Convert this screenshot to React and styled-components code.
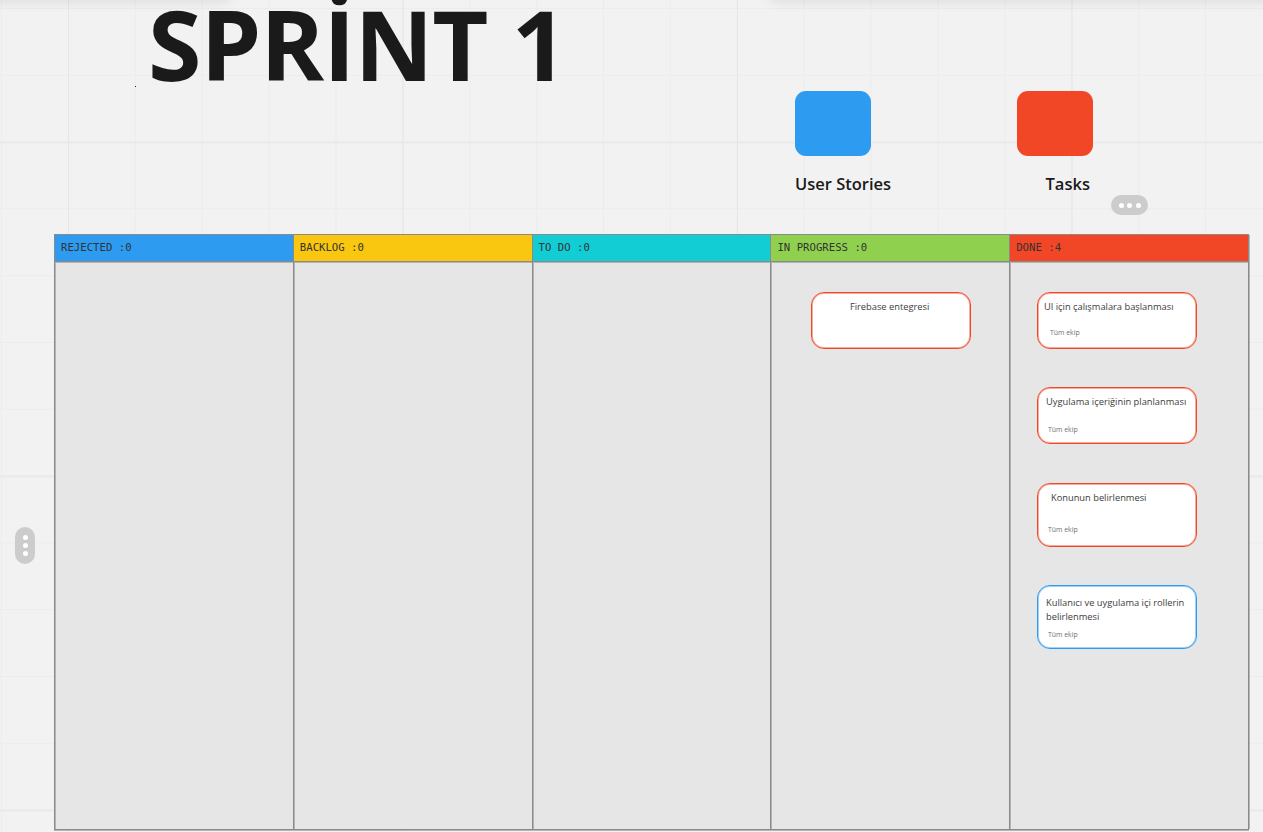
import React from "react";
import styled, { createGlobalStyle } from "styled-components";

const GlobalStyle = createGlobalStyle`
  html, body { margin: 0; padding: 0; background: #f2f2f2; }
  body { font-family: "Open Sans", "Noto Sans", sans-serif; overflow: hidden; }
`;

const Canvas = styled.div`
  position: relative;
  width: 1263px;
  height: 832px;
  overflow: hidden;
  background-color: #f2f2f2;
  background-image:
    linear-gradient(to right, #e6e6e6 1px, transparent 1px),
    linear-gradient(to bottom, #e9e9e9 2px, transparent 2px),
    linear-gradient(to right, #ececec 1px, transparent 1px),
    linear-gradient(to bottom, #ececec 1px, transparent 1px);
  background-size: 334.5px 334px, 334px 334px, 66.9px 66.8px, 66.8px 66.8px;
  background-position: 68px 0, 0 141.5px, 1px 0, 0 8px;
`;

const TopShadow = styled.div`
  position: absolute;
  top: -12px;
  left: ${(p) => p.$left}px;
  width: ${(p) => p.$width}px;
  height: 12px;
  box-shadow: 0 0 14px rgba(0, 0, 0, 0.12);
`;

const Header = styled.header`
  display: flex;
  height: 234px;
`;

const Title = styled.h1`
  flex: 0 0 795px;
  box-sizing: border-box;
  margin: 0;
  padding: 0 0 0 148px;
  font-size: 97px;
  font-weight: 700;
  letter-spacing: -1px;
  line-height: 87px;
  color: #1a1a1a;
  white-space: nowrap;
`;

const Legend = styled.div`
  display: flex;
  padding-top: 91px;
`;

const LegendItem = styled.div`
  width: 221.5px;
`;

const Swatch = styled.div`
  width: 76px;
  height: 65px;
  border-radius: 11px;
  background: ${(p) => p.$color};
`;

const LegendLabel = styled.div`
  margin-top: 17px;
  padding-left: ${(p) => p.$indent || 0}px;
  font-size: 16.5px;
  font-weight: 600;
  line-height: 22px;
  color: #1a1a1a;
`;

const Board = styled.div`
  display: grid;
  grid-template-columns: repeat(5, 1fr);
  box-sizing: border-box;
  width: 1195px;
  height: 596px;
  margin-left: 54px;
  background: #e6e6e6;
  border: 1px solid #8a8a8a;
  border-right-width: 0;
  box-shadow: inset 1px 1px 0 #b4b4b4, 0 1px 0 #b4b4b4;
`;

const Column = styled.section`
  display: flex;
  flex-direction: column;
  min-width: 0;
  border-right: 1px solid #8a8a8a;
  box-shadow: 1px 0 0 #b4b4b4;
`;

const ColumnHead = styled.div`
  flex: 0 0 26px;
  padding-left: 6px;
  font-family: "DejaVu Sans Mono", "Liberation Mono", monospace;
  font-size: 10.67px;
  line-height: 25px;
  color: #333;
  background: ${(p) => p.$color};
  border-bottom: 1px solid #8a8a8a;
  box-shadow: 0 1px 0 #b4b4b4;
`;

const CardList = styled.div`
  display: flex;
  flex-direction: column;
  gap: 38.3px;
  padding: 30px 0 0 ${(p) => p.$indent}px;
`;

const Card = styled.article`
  display: flex;
  flex-direction: column;
  justify-content: space-between;
  box-sizing: border-box;
  width: 160px;
  height: ${(p) => p.$height}px;
  padding: ${(p) => p.$top}px 0 ${(p) => p.$bottom}px;
  background: #fff;
  border: 1px solid ${(p) => p.$color};
  border-radius: 13px;
  box-shadow: inset 0 0 0 1px color-mix(in srgb, ${(p) => p.$color} 45%, transparent);
`;

const CardText = styled.div`
  padding-left: ${(p) => p.$indent}px;
  font-size: 9.3px;
  line-height: 14px;
  color: #3c3c3c;
  white-space: pre-line;
`;

const CardOwner = styled.div`
  padding-left: ${(p) => p.$indent}px;
  font-size: 6.9px;
  line-height: 9px;
  color: #707070;
`;

const HandleH = styled.div`
  position: absolute;
  left: 1111px;
  top: 195px;
  display: flex;
  align-items: center;
  justify-content: center;
  gap: 3.5px;
  width: 37px;
  height: 20px;
  border-radius: 10px;
  background: #cccccc;
`;

const HandleV = styled(HandleH)`
  left: 15px;
  top: 527px;
  flex-direction: column;
  gap: 3px;
  width: 20px;
  height: 37px;
`;

const Dot = styled.span`
  width: 5px;
  height: 5px;
  border-radius: 50%;
  background: #fff;
`;

const Speck = styled.div`
  position: absolute;
  left: 135px;
  top: 86px;
  width: 1px;
  height: 1px;
  background: #222;
`;

const RED = "#f24726";
const BLUE = "#2d9bf0";

const columns = [
  { name: "REJECTED :0", color: BLUE, indent: 0, cards: [] },
  { name: "BACKLOG :0", color: "#fac710", indent: 0, cards: [] },
  { name: "TO DO :0", color: "#12cdd4", indent: 0, cards: [] },
  {
    name: "IN PROGRESS :0",
    color: "#8fd14f",
    indent: 39.5,
    cards: [{ text: "Firebase entegresi", textIndent: 38, top: 7, height: 57, color: RED }],
  },
  {
    name: "DONE :4",
    color: RED,
    indent: 26.8,
    cards: [
      { text: "UI için çalışmalara başlanması", textIndent: 6, owner: 12, top: 7, height: 57, bottom: 11, color: RED },
      { text: "Uygulama içeriğinin planlanması", textIndent: 8, owner: 10, top: 7, height: 57, bottom: 9, color: RED },
      { text: "Konunun belirlenmesi", textIndent: 13, owner: 10, top: 7, height: 64, bottom: 12, color: RED },
      { text: "Kullanıcı ve uygulama içi rollerin\nbelirlenmesi", textIndent: 8, owner: 10, top: 10, height: 64, bottom: 9, color: BLUE },
    ],
  },
];

export default function App() {
  return (
    <Canvas>
      <GlobalStyle />
      <TopShadow $left={-20} $width={250} />
      <TopShadow $left={770} $width={520} />
      <Header>
        <Title>SPRİNT 1</Title>
        <Legend>
          <LegendItem>
            <Swatch $color={BLUE} />
            <LegendLabel>User Stories</LegendLabel>
          </LegendItem>
          <LegendItem>
            <Swatch $color={RED} />
            <LegendLabel $indent={29}>Tasks</LegendLabel>
          </LegendItem>
        </Legend>
      </Header>
      <Board>
        {columns.map((col) => (
          <Column key={col.name}>
            <ColumnHead $color={col.color}>{col.name}</ColumnHead>
            <CardList $indent={col.indent}>
              {col.cards.map((card) => (
                <Card key={card.text} $height={card.height} $color={card.color} $top={card.top} $bottom={card.bottom || 0}>
                  <CardText $indent={card.textIndent}>{card.text}</CardText>
                  {card.owner && <CardOwner $indent={card.owner}>Tüm ekip</CardOwner>}
                </Card>
              ))}
            </CardList>
          </Column>
        ))}
      </Board>
      <Speck />
      <HandleH>
        <Dot />
        <Dot />
        <Dot />
      </HandleH>
      <HandleV>
        <Dot />
        <Dot />
        <Dot />
      </HandleV>
    </Canvas>
  );
}
